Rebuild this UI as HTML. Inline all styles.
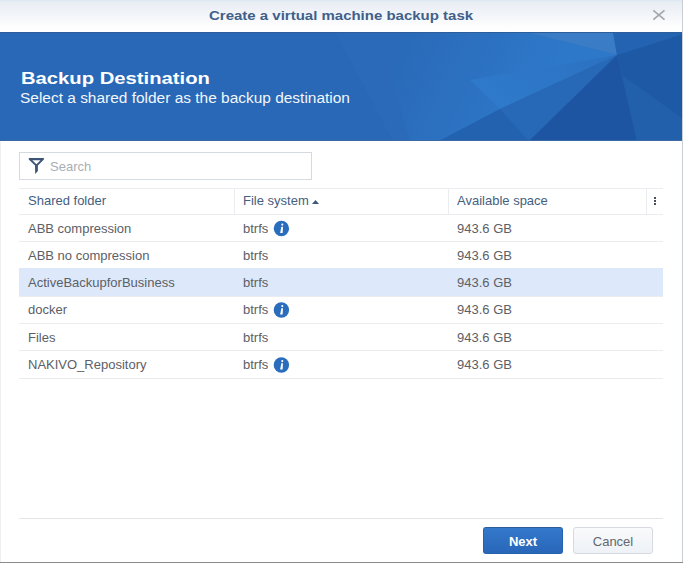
<!DOCTYPE html>
<html><head><meta charset="utf-8">
<style>
html,body{margin:0;padding:0;}
body{width:683px;height:563px;position:relative;overflow:hidden;background:#fff;font-family:"Liberation Sans",sans-serif;}
.abs{position:absolute;}
#titlebar{left:0;top:0;width:683px;height:32px;background:linear-gradient(#dbe7f5 0px,#e8edf4 2px,#f0f3f8 12px,#fdfdfe 26px,#ffffff 31px);}
#title{left:209px;top:8px;font-size:13px;font-weight:bold;color:#40608a;line-height:16px;white-space:nowrap;transform:scaleX(1.153);transform-origin:0 0;}
#banner{left:0;top:32px;width:683px;height:109px;background:#2868b7;overflow:hidden;}
#h1{left:21px;top:69px;font-size:17px;font-weight:bold;color:#fff;line-height:20px;white-space:nowrap;transform:scaleX(1.19);transform-origin:0 0;}
#h2{left:20px;top:90px;font-size:14px;color:#f2f6fb;line-height:17px;white-space:nowrap;transform:scaleX(1.104);transform-origin:0 0;}
#search{left:19px;top:152px;width:291px;height:26px;border:1px solid #d5d9e0;background:#fff;}
#searchtxt{left:50px;top:159px;font-size:13px;color:#a9aeb5;line-height:15px;}
.hline{position:absolute;height:1px;background:#eaecef;}
.vline{position:absolute;width:1px;background:#eaecef;}
.cell{position:absolute;font-size:13px;line-height:15px;color:#5c6066;white-space:nowrap;}
.hdr{color:#44607f;}
.info{position:absolute;width:16px;height:16px;}
#next{left:483px;top:527px;width:80px;height:27px;border-radius:3px;background:linear-gradient(#3479cc,#2866b8);box-sizing:border-box;border:1px solid #2862ad;border-top-color:#2d5d9a;}
#nexttxt{left:483px;top:534px;width:80px;text-align:center;font-size:13px;font-weight:bold;color:#fff;line-height:15px;}
#cancel{left:573px;top:527px;width:80px;height:27px;border-radius:3px;background:linear-gradient(#f9fafc,#eef2f6);box-sizing:border-box;border:1px solid #d6dae0;}
#canceltxt{left:573px;top:534px;width:80px;text-align:center;font-size:13px;color:#626870;line-height:15px;}
</style></head><body>
<div id="titlebar" class="abs"></div>
<div id="title" class="abs">Create a virtual machine backup task</div>
<svg class="abs" style="left:648px;top:5px" width="20" height="20" viewBox="648 5 20 20"><path d="M653.3,10.4 L664.5,19.6 M664.5,10.4 L653.3,19.6" stroke="#a3a7ad" stroke-width="1.7" fill="none"/></svg>

<div id="banner" class="abs">
<svg width="683" height="109" viewBox="0 32 683 109" style="position:absolute;left:0;top:0">
  <defs>
    <linearGradient id="gA" gradientUnits="userSpaceOnUse" x1="400" y1="40" x2="540" y2="105">
      <stop offset="0" stop-color="#2a6ab8"/><stop offset="1" stop-color="#2e78c9"/>
    </linearGradient>
    <linearGradient id="gB" gradientUnits="userSpaceOnUse" x1="600" y1="55" x2="500" y2="109">
      <stop offset="0" stop-color="#2c70c0"/><stop offset="1" stop-color="#2f7bcc"/>
    </linearGradient>
  </defs>
  <polygon points="335,32 683,32 683,141 393,141" fill="#2a6ab9"/>
  <polygon points="380,32 526,32 617,55 500,109 439,141 410,141" fill="url(#gA)"/>
  <polygon points="617,55 500,109 470,80" fill="url(#gB)" opacity="0.8"/>
  <polygon points="526,32 613,32 617,55" fill="#3a7cc5"/>
  <polygon points="613,32 683,32 683,34 617,55" fill="#2363b1"/>
  <polygon points="439,141 500,109 529,141" fill="#2362ae"/>
  <polygon points="500,109 617,55 529,141" fill="#2769b7"/>
  <polygon points="617,55 529,141 637,141" fill="#1d55a2"/>
  <polygon points="617,55 683,34 683,141 637,141" fill="#1e59a6"/>
  <polygon points="622,75 683,119 683,141 637,141" fill="#2360ac"/>
</svg>
<div style="position:absolute;left:0;top:0;width:683px;height:1px;background:#2e5e99"></div>
<div style="position:absolute;left:0;top:108px;width:683px;height:1px;background:#3a6aa3"></div>
</div>
<div id="h1" class="abs">Backup Destination</div>
<div id="h2" class="abs">Select a shared folder as the backup destination</div>

<div id="search" class="abs"></div>
<svg class="abs" style="left:24px;top:154px" width="24" height="24" viewBox="24 154 24 24"><path fill-rule="evenodd" fill="#3f5577" d="M28.8,157.9 L43.9,157.9 L43.9,159.4 L37.9,165.6 L37.9,171 L35.2,174 L35,165.6 L28.8,159.4 Z M32.3,160.3 L40.5,160.3 L36.4,164.3 Z"/></svg>
<div id="searchtxt" class="abs">Search</div>

<!-- table lines -->
<div class="hline" style="left:19px;top:188px;width:644px;"></div>
<div class="hline" style="left:19px;top:214px;width:644px;"></div>
<div class="vline" style="left:234px;top:189px;height:25px;"></div>
<div class="vline" style="left:448px;top:189px;height:25px;"></div>
<div class="vline" style="left:646px;top:189px;height:25px;"></div>
<div class="hline" style="left:19px;top:241px;width:644px;"></div>
<div class="abs" style="left:19px;top:268px;width:644px;height:28px;background:#dde9fb;"></div>
<div class="hline" style="left:19px;top:296px;width:644px;"></div>
<div class="hline" style="left:19px;top:323px;width:644px;"></div>
<div class="hline" style="left:19px;top:350px;width:644px;"></div>
<div class="hline" style="left:19px;top:378px;width:644px;"></div>

<div class="cell hdr" style="left:28px;top:193px;">Shared folder</div>
<div class="cell hdr" style="left:243px;top:193px;">File system</div>
<svg class="abs" style="left:312px;top:200px" width="7" height="4" viewBox="0 0 7 4"><path d="M0 4 L3.5 0 L7 4Z" fill="#3d5878"/></svg>
<div class="cell hdr" style="left:457px;top:193px;">Available space</div>
<svg class="abs" style="left:654px;top:197px" width="2" height="8" viewBox="0 0 2 8"><rect x="0" y="0" width="2" height="2" fill="#444e5c"/><rect x="0" y="3" width="2" height="2" fill="#444e5c"/><rect x="0" y="6" width="2" height="2" fill="#444e5c"/></svg>

<div class="cell" style="left:28px;top:221px;">ABB compression</div>
<div class="cell" style="left:243px;top:221px;">btrfs</div>
<div class="cell" style="left:457px;top:221px;">943.6 GB</div>

<div class="cell" style="left:28px;top:248px;">ABB no compression</div>
<div class="cell" style="left:243px;top:248px;">btrfs</div>
<div class="cell" style="left:457px;top:248px;">943.6 GB</div>

<div class="cell" style="left:28px;top:275px;">ActiveBackupforBusiness</div>
<div class="cell" style="left:243px;top:275px;">btrfs</div>
<div class="cell" style="left:457px;top:275px;">943.6 GB</div>

<div class="cell" style="left:28px;top:302px;">docker</div>
<div class="cell" style="left:243px;top:302px;">btrfs</div>
<div class="cell" style="left:457px;top:302px;">943.6 GB</div>

<div class="cell" style="left:28px;top:330px;">Files</div>
<div class="cell" style="left:243px;top:330px;">btrfs</div>
<div class="cell" style="left:457px;top:330px;">943.6 GB</div>

<div class="cell" style="left:28px;top:357px;">NAKIVO_Repository</div>
<div class="cell" style="left:243px;top:357px;">btrfs</div>
<div class="cell" style="left:457px;top:357px;">943.6 GB</div>


<svg class="abs" style="left:270px;top:217px" width="22" height="22" viewBox="270 217 22 22"><circle cx="281.4" cy="228.5" r="7.7" fill="#2b6dbd"/><circle cx="282.3" cy="224.6" r="1.05" fill="#fff"/><path d="M281.3,226.7 L283.0,226.7 L282.6,233.0 L280.2,233.0 Z" fill="#fff"/></svg>
<svg class="abs" style="left:270px;top:299px" width="22" height="22" viewBox="270 299 22 22"><circle cx="281.4" cy="310" r="7.7" fill="#2b6dbd"/><circle cx="282.3" cy="306.1" r="1.05" fill="#fff"/><path d="M281.3,308.2 L283.0,308.2 L282.6,314.5 L280.2,314.5 Z" fill="#fff"/></svg>
<svg class="abs" style="left:270px;top:354px" width="22" height="22" viewBox="270 354 22 22"><circle cx="281.4" cy="365" r="7.7" fill="#2b6dbd"/><circle cx="282.3" cy="361.1" r="1.05" fill="#fff"/><path d="M281.3,363.2 L283.0,363.2 L282.6,369.5 L280.2,369.5 Z" fill="#fff"/></svg>
<div class="hline" style="left:19px;top:518px;width:644px;background:#e3e5e8;"></div>
<div id="next" class="abs"></div>
<div id="nexttxt" class="abs">Next</div>
<div id="cancel" class="abs"></div>
<div id="canceltxt" class="abs">Cancel</div>

<div class="abs" style="left:0;top:141px;width:1px;height:421px;background:#eff0f2;"></div>
<div class="abs" style="left:682px;top:0;width:1px;height:563px;background:#c9cdd4;"></div>
<div class="abs" style="left:0;top:562px;width:683px;height:1px;background:#8a8a8a;"></div>
</body></html>
